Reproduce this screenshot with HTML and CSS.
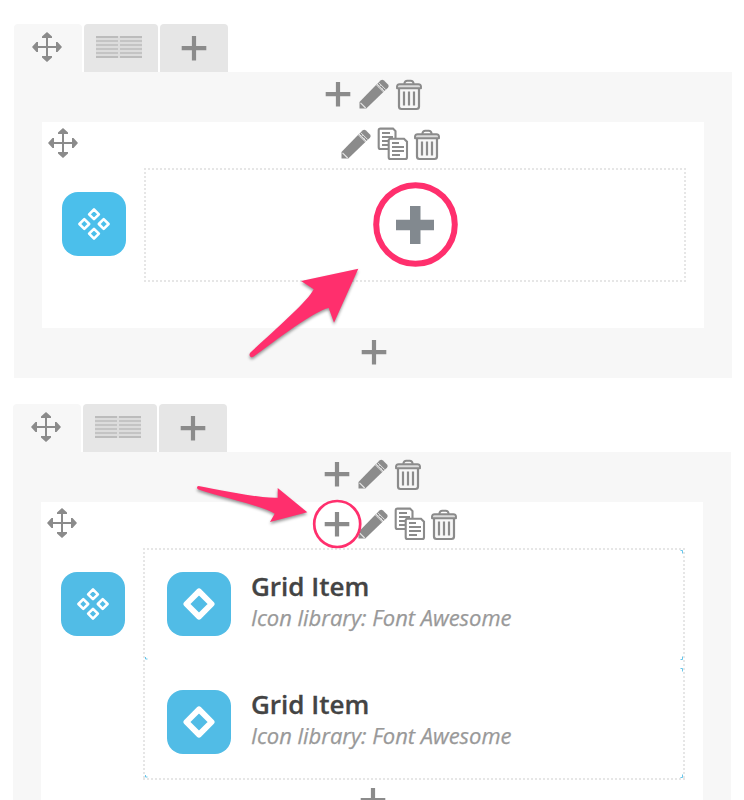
FILE: index.html
```html
<!DOCTYPE html>
<html lang="en">
<head>
<meta charset="utf-8">
<title>Grid builder</title>
<link rel="stylesheet" href="styles.css">
</head>
<body>
<svg class="defs" aria-hidden="true">
  <symbol id="move" viewBox="0 0 30 30">
    <path d="M15 4v22M4 15h22" stroke="currentColor" stroke-width="2" fill="none"/>
    <path d="M15 0l5 4.500v1.500H10V4.500zM15 30l5-4.500V24H10v1.500zM0 15l4.500-5H6v10H4.500zM30 15l-4.500-5H24v10h1.500z" fill="currentColor"/>
  </symbol>
  <symbol id="plus" viewBox="0 0 32 32">
    <path d="M16 3v24.500M3.700 15.200h24.600" stroke="currentColor" stroke-width="4.200" fill="none"/>
  </symbol>
  <symbol id="pencil" viewBox="0 0 32 32">
    <path d="M1.500 29.500v-6.500L18.700 5.300l7.200 7.200L8.300 29.500z" fill="currentColor"/>
    <path d="M19.300 4.700l3.200-3.200q1.800-1.500 3.500 0l4 4q1.500 1.500 0 3.200l-3.500 3.300z" fill="currentColor"/>
    <path d="M18.500 6l7 7M20.800 3.700l7 7" stroke="#e2e2e2" stroke-width="1"/>
    <path d="M20.500 8.200l2.600-2.200M23 10.600l2.600-2.200" stroke="#d2d2d2" stroke-width=".8"/>
    <path d="M2.500 23.800l5.200 5.200" stroke="#e6e6e6" stroke-width="1.200"/>
  </symbol>
  <symbol id="trash" viewBox="0 0 32 32">
    <path d="M5 9v18.500q0 2.500 2.500 2.500h15q2.500 0 2.500-2.500V9" fill="#f7f7f7" stroke="currentColor" stroke-width="2.200"/>
    <path d="M3 9.300V7.500Q3.300 5.300 5.500 5.300h19q2.200 0 2.500 2.200v1.800z" fill="#dcdcdc" stroke="currentColor" stroke-width="1.900" stroke-linejoin="round"/>
    <path d="M10.300 4.800q.4-3 3-3h3.400q2.600 0 3 3" fill="none" stroke="currentColor" stroke-width="2"/>
    <path d="M10 12.500v14M15 12.500v14M20 12.500v14" stroke="currentColor" stroke-width="2.200"/>
  </symbol>
  <symbol id="copy" viewBox="0 0 32 32" overflow="visible">
    <path d="M4.500-.4h12.500l2.500 2.500V20h-15q-1.800 0-1.800-1.800V1.400q0-1.800 1.800-1.800z" fill="#fff" stroke="currentColor" stroke-width="2.100"/>
    <path d="M6 4h8M6 8h11M6 12h6M6 16h6" stroke="currentColor" stroke-width="1.800"/>
    <path d="M14.500 9.800h13.500l3 3v15.400q0 1.800-1.800 1.800H14.500q-1.800 0-1.800-1.800V11.600q0-1.800 1.800-1.800z" fill="#fff" stroke="currentColor" stroke-width="2.100"/>
    <path d="M16 14h7M16 18h12M16 22h12M16 26h8" stroke="currentColor" stroke-width="1.800"/>
  </symbol>
  <symbol id="layout" viewBox="0 0 46 22">
    <path fill="#dcdcdc" d="M0 0h46v22H0z"/>
    <path d="M0 5h22M24 5h22M0 9h22M24 9h22M0 13h22M24 13h22M0 17h22M24 17h22" stroke="#c4c4c4" stroke-width="2"/>
    <path d="M0 1h22M24 1h22M0 21h22M24 21h22" stroke="#bcbcbc" stroke-width="2"/>
  </symbol>
  <symbol id="grid" viewBox="0 0 64 64">
    <path d="M32 17.400l4.900 4.900-4.900 4.900-4.900-4.900zM32 36.800l4.900 4.900-4.900 4.900-4.900-4.900zM22.300 27.100l4.900 4.900-4.900 4.900-4.900-4.900zM41.700 27.100l4.900 4.900-4.900 4.900-4.900-4.900z" fill="none" stroke="#fff" stroke-width="2.600" stroke-linejoin="round"/>
  </symbol>
  <symbol id="item" viewBox="0 0 64 64">
    <path d="M32 19.400L44.600 32 32 44.600 19.400 32z" fill="none" stroke="#fff" stroke-width="5.800" stroke-linejoin="round"/>
  </symbol>
</svg>

<main class="page">
  <section class="builder">
    <div class="tabs">
      <div class="tab tab-active"><svg class="move"><use href="#move"/></svg></div>
      <div class="tab tab-layout"><svg class="layout"><use href="#layout"/></svg></div>
      <div class="tab"><svg class="icon"><use href="#plus"/></svg></div>
    </div>
    <div class="row">
      <div class="tools row-tools">
        <svg class="icon"><use href="#plus"/></svg>
        <svg class="icon"><use href="#pencil"/></svg>
        <svg class="icon"><use href="#trash"/></svg>
      </div>
      <div class="column">
        <div class="column-head">
          <svg class="move"><use href="#move"/></svg>
          <div class="tools tools-short">
            <svg class="icon"><use href="#pencil"/></svg>
            <svg class="icon"><use href="#copy"/></svg>
            <svg class="icon"><use href="#trash"/></svg>
          </div>
        </div>
        <div class="element">
          <svg class="badge badge-bright"><use href="#grid"/></svg>
          <div class="dropzone dropzone-empty">
            <svg class="big-plus" viewBox="0 0 38 38"><path d="M14 0h10.500v13.800H38v10.500H24.500V38H14V24.300H0V13.800h14z" fill="#82898f"/></svg>
          </div>
        </div>
      </div>
      <div class="row-foot"><svg class="icon"><use href="#plus"/></svg></div>
    </div>
  </section>

  <section class="builder builder-second">
    <div class="tabs">
      <div class="tab tab-active"><svg class="move"><use href="#move"/></svg></div>
      <div class="tab tab-layout"><svg class="layout"><use href="#layout"/></svg></div>
      <div class="tab"><svg class="icon"><use href="#plus"/></svg></div>
    </div>
    <div class="row">
      <div class="tools row-tools">
        <svg class="icon"><use href="#plus"/></svg>
        <svg class="icon"><use href="#pencil"/></svg>
        <svg class="icon"><use href="#trash"/></svg>
      </div>
      <div class="column column-tall">
        <div class="column-head">
          <svg class="move"><use href="#move"/></svg>
          <div class="tools">
            <svg class="icon"><use href="#plus"/></svg>
            <svg class="icon"><use href="#pencil"/></svg>
            <svg class="icon"><use href="#copy"/></svg>
            <svg class="icon"><use href="#trash"/></svg>
          </div>
        </div>
        <div class="element">
          <svg class="badge"><use href="#grid"/></svg>
          <div class="dropzone dropzone-items">
            <div class="item">
              <svg class="badge"><use href="#item"/></svg>
              <div class="item-text">
                <h3>Grid Item</h3>
                <p>Icon library: Font Awesome</p>
              </div>
            </div>
            <div class="item">
              <svg class="badge"><use href="#item"/></svg>
              <div class="item-text">
                <h3>Grid Item</h3>
                <p>Icon library: Font Awesome</p>
              </div>
            </div>
          </div>
        </div>
        <div class="column-foot"><svg class="icon"><use href="#plus"/></svg></div>
      </div>
    </div>
  </section>

  <svg class="annotations" viewBox="0 0 744 800">
    <g fill="none" stroke="#ff2f6d">
      <circle cx="415.500" cy="224.500" r="39.300" stroke-width="6"/>
      <circle cx="337.200" cy="524" r="23" stroke-width="2.700"/>
    </g>
    <g class="arrows" fill="#ff2f6d">
      <path d="M358.300 268.700L301 281l12.700 8.300C308 301 279 326 250.200 352.700q-1.500 2.300.2 4.100q1.600 1.100 3.300-.2C277 339.500 314 311 328.700 308l5.300 14.700z"/>
      <path d="M307.300 512.300L277.700 488v9.700C259 498.500 220 490 198.500 486q-1.500 0-1.500 1.600q0 1.300 1.500 1.900C220 497 263 506 274.700 513.700L270 522z"/>
    </g>
    <g fill="none" stroke="#42b7e6">
      <path d="M680.500 550.500h2v3M680.500 659.500h2v-3M680.500 668.500h2v3M680.500 777.500h2v-3M145.500 657v2h2M145.500 775v2h2" stroke-width=".8"/>
    </g>
  </svg>
</main>
</body>
</html>
```
FILE: styles.css
```css
* {
  box-sizing: border-box;
}

body {
  margin: 0;
  background: #fff;
  color: #444;
  font-family: "Open Sans", "Noto Sans", sans-serif;
}

svg {
  display: block;
  flex: none;
  overflow: visible;
}

symbol {
  overflow: visible;
}

.defs {
  position: absolute;
  width: 0;
  height: 0;
}

.page {
  position: relative;
  height: 800px;
  padding: 24px 0 0 14px;
  overflow: hidden;
}

.builder {
  width: 718px;
  color: #8b8b8b;
}

.builder-second {
  margin: 26px 0 0 -1px;
}

.tabs {
  display: flex;
  gap: 2px;
  height: 48px;
}

.tab {
  display: flex;
  width: 68px;
  padding: 9px 0 0 18px;
  border-radius: 4px 4px 0 0;
  background: #e6e6e6;
}

.tab-active {
  padding-top: 8px;
  background: #f7f7f7;
}

.tab-layout {
  width: 74px;
  padding: 12px 0 0 12px;
}

.move {
  width: 30px;
  height: 30px;
}

.layout {
  width: 46px;
  height: 22px;
}

.icon {
  width: 32px;
  height: 32px;
}

.row {
  height: 306px;
  padding: 0 28px;
  background: #f7f7f7;
}

.builder-second .row {
  height: 350px;
}

.tools {
  display: flex;
  gap: 4px;
}

.row-tools {
  height: 50px;
  padding: 7px 0 0 280px;
}

.column {
  height: 206px;
  background: #fff;
}

.column-tall {
  height: 300px;
}

.column-head {
  display: flex;
  gap: 244px;
  height: 46px;
  padding: 6px 0 0 6px;
}

.column-head .tools {
  padding-top: 1px;
}

.column-head .tools-short {
  margin-left: 18px;
}

.element {
  display: flex;
  gap: 18px;
  padding-left: 20px;
}

.badge {
  width: 64px;
  height: 64px;
  border-radius: 16px;
  background: #51bce6;
}

.badge-bright {
  background: #4bbfeb;
}

.element > .badge {
  margin-top: 24px;
}

.dropzone {
  width: 542px;
  background-image:
    repeating-linear-gradient(90deg, #e6e6e6 0 2px, transparent 2px 4px),
    repeating-linear-gradient(90deg, #e6e6e6 0 2px, transparent 2px 4px),
    repeating-linear-gradient(180deg, #e6e6e6 0 2px, transparent 2px 4px),
    repeating-linear-gradient(180deg, #e6e6e6 0 2px, transparent 2px 4px);
  background-position: left top, left bottom, left top, right top;
  background-size: 100% 2px, 100% 2px, 2px 100%, 2px 100%;
  background-repeat: no-repeat;
}

.dropzone-empty {
  height: 114px;
  padding: 38px 0 0 252px;
}

.big-plus {
  width: 38px;
  height: 38px;
}

.dropzone-items {
  height: 232px;
  padding: 24px 0 0 24px;
}

.item {
  display: flex;
  gap: 20px;
  height: 118px;
}

.item h3 {
  margin: 0;
  color: #444;
  font-size: 26px;
  font-weight: 600;
  line-height: 28px;
  -webkit-text-stroke: .3px #444;
}

.item p {
  margin: 0;
  color: #999;
  font-size: 22px;
  font-style: italic;
  letter-spacing: -.03px;
  line-height: 34px;
  white-space: nowrap;
  -webkit-text-stroke: .25px #999;
}

.row-foot {
  padding: 9px 0 0 316px;
}

.column-foot {
  padding: 5px 0 0 316px;
}

.annotations {
  position: absolute;
  top: 0;
  left: 0;
  width: 744px;
  height: 800px;
}

.arrows {
  filter: drop-shadow(0 2px 1.5px rgba(0, 0, 0, .4));
}
```
